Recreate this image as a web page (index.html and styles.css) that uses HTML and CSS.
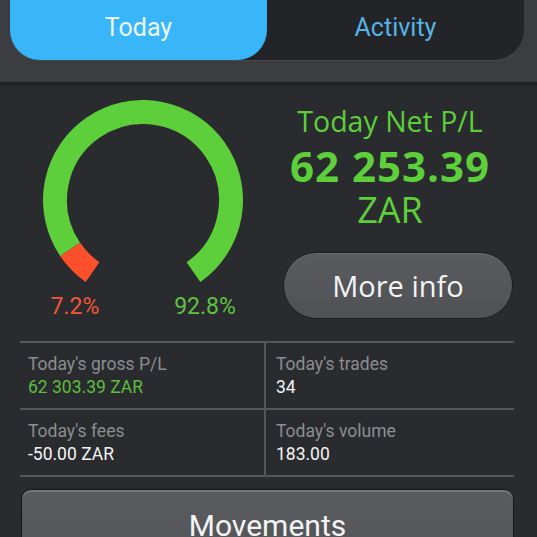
FILE: index.html
```html
<!DOCTYPE html>
<html lang="en">
<head>
  <meta charset="UTF-8" />
  <title>Today</title>
  <link rel="stylesheet" href="styles.css">
</head>
<body>
  <header class="topbar">
    <nav class="tabs">
      <div class="tab active">Today</div>
      <div class="tab">Activity</div>
    </nav>
  </header>

  <main class="content">
    <section class="summary">
      <div class="gauge">
        <svg class="gauge-ring" width="200" height="185" viewBox="0 0 200 185">
          <path class="arc-loss" d="M 49.52 172.09 A 88 88 0 0 1 27.04 149.21" />
          <path class="arc-win" d="M 27.04 149.21 A 88 88 0 1 1 150.48 172.09" />
        </svg>
        <div class="gauge-labels">
          <span class="pct loss">7.2%</span>
          <span class="pct win">92.8%</span>
        </div>
      </div>

      <div class="net">
        <div class="net-text">
          <div class="net-title">Today Net P/L</div>
          <div class="net-amount">62 253.39</div>
          <div class="net-currency">ZAR</div>
        </div>
        <button class="pill-btn">More info</button>
      </div>
    </section>

    <section class="stats">
      <div class="stat">
        <div class="stat-label">Today's gross P/L</div>
        <div class="stat-value green">62 303.39 ZAR</div>
      </div>
      <div class="stat">
        <div class="stat-label">Today's trades</div>
        <div class="stat-value">34</div>
      </div>
      <div class="stat">
        <div class="stat-label">Today's fees</div>
        <div class="stat-value">-50.00 ZAR</div>
      </div>
      <div class="stat">
        <div class="stat-label">Today's volume</div>
        <div class="stat-value">183.00</div>
      </div>
    </section>

    <button class="wide-btn">Movements</button>
  </main>
</body>
</html>
```

FILE: styles.css
```css
:root {
  --bg:        #2a2b2e;
  --bar:       #3c3d41;
  --tab-dark:  #232427;
  --blue:      #38b6f9;
  --blue-text: #55b3e6;
  --green:     #5ccf3a;
  --red:       #fc4f2c;
  --line:      #55565a;
  --label:     #8c8d91;
}

html, body {
  margin: 0;
  height: 537px;
  overflow: hidden;
}

body {
  background: var(--bg);
  color: #f2f2f2;
  font-family: Roboto, "Noto Sans", sans-serif;
}

.topbar {
  height: 85px;
  background: var(--bar);
  border-bottom: 3px solid #1f2022;
  box-sizing: border-box;
}

.tabs {
  display: flex;
  margin: 0 13px 0 10px;
  height: 60px;
  background: var(--tab-dark);
  border-radius: 0 0 30px 30px;
  box-shadow: 0 1px 0 #4a4b4f;
}

.tab {
  flex: 1;
  display: flex;
  align-items: center;
  justify-content: center;
  padding-bottom: 6px;
  font-size: 25px;
  color: var(--blue-text);
}
.tab.active {
  background: var(--blue);
  color: #eef8ff;
  border-radius: 0 0 30px 30px;
}

.summary {
  display: flex;
  height: 256px;
}

.gauge {
  width: 260px;
  flex-shrink: 0;
  padding: 15px 0 0 43px;
  box-sizing: border-box;
}
.gauge-ring { display: block; }
.gauge-ring path {
  fill: none;
  stroke-width: 24;
  stroke-linecap: butt;
}
.arc-loss { stroke: var(--red); }
.arc-win  { stroke: var(--green); }

.gauge-labels {
  display: grid;
  grid-template-columns: 64px 54px 88px;
  margin-top: 8px;
}
.pct { font-size: 23px; text-align: center; }
.pct.loss { color: #f25638; }
.pct.win  { color: #5fc341; grid-column: 3; }

.net {
  width: 230px;
  margin-left: 23px;
  padding-top: 18px;
}
.net-text {
  margin-right: 16px;
  text-align: center;
  color: var(--green);
  font-family: "Open Sans", "Noto Sans", sans-serif;
}
.net-title { font-size: 28.5px; line-height: 36px; }
.net-amount { font-size: 42px; font-weight: 700; line-height: 53px; letter-spacing: 1px; }
.net-currency { font-size: 36px; line-height: 36px; }

.pill-btn {
  display: block;
  width: 100%;
  height: 67px;
  margin-top: 24px;
  border: 1px solid #1c1d1f;
  border-radius: 34px;
  background: linear-gradient(#5a5b5f, #505155);
  box-shadow: inset 0 1px 0 #6c6d71;
  color: #f4f4f4;
  font-family: "Open Sans", "Noto Sans", sans-serif;
  font-size: 29px;
}

.stats {
  display: grid;
  grid-template-columns: 246px 248px;
  margin: 0 23px 0 20px;
  border-top: 2px solid var(--line);
}
.stat {
  height: 67px;
  padding: 10px 0 0 8px;
  box-sizing: border-box;
  border-bottom: 2px solid var(--line);
}
.stat:nth-child(odd) { border-right: 2px solid var(--line); }
.stat:nth-child(even) { padding-left: 10px; }

.stat-label { font-size: 17.5px; line-height: 22px; color: var(--label); }
.stat-value { font-size: 17.5px; line-height: 25px; color: #f4f4f4; }
.stat-value.green { color: #5cbf3d; }

.wide-btn {
  display: block;
  width: 493px;
  height: 80px;
  margin: 12px 0 0 21px;
  padding-bottom: 8px;
  border: 1px solid #18191b;
  border-radius: 10px;
  background: linear-gradient(#5a5b5f, #535458);
  box-shadow: inset 0 2px 0 #76777b;
  color: #f4f4f4;
  font-family: Roboto, "Noto Sans", sans-serif;
  font-size: 30px;
}
```
